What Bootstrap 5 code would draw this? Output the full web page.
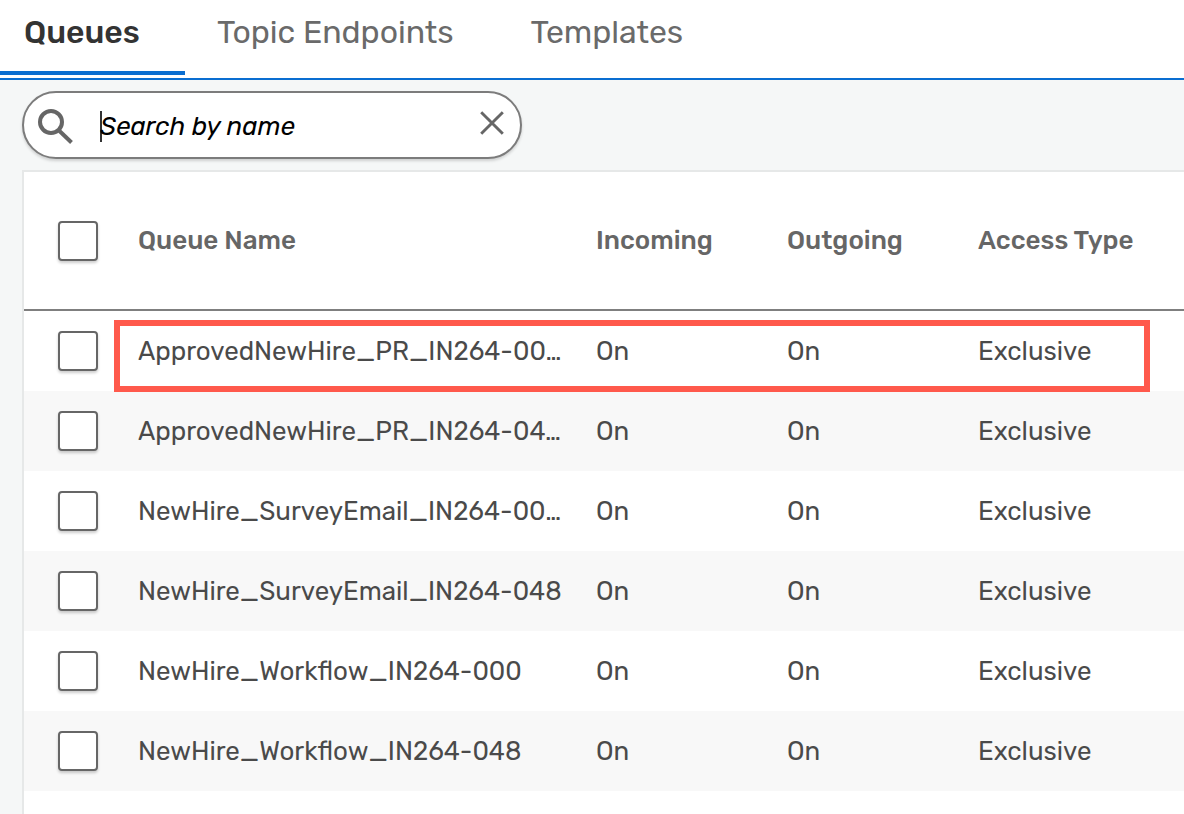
<!DOCTYPE html>
<html lang="en">
<head>
<meta charset="utf-8">
<meta name="viewport" content="width=device-width, initial-scale=1">
<title>Queues</title>
<link href="https://cdn.jsdelivr.net/npm/bootstrap@5.3.0/dist/css/bootstrap.min.css" rel="stylesheet">
<style>
  body { font-family: Rubik, Roboto, "Liberation Sans", sans-serif; background: #f5f7f7; height: 814px; font-size: 26px; }
  .tab-bar { height: 80px; border-bottom: 2px solid #0a6ed1; }
  .tab-bar .nav-link { height: 75px; padding: 8px 0 0; font-size: 32px; line-height: 48px; color: #6a6a6a; border-radius: 0; white-space: nowrap; letter-spacing: -.04px; }
  .tab-bar .nav-link.active { width: 185px; padding-left: 24px; color: #333; font-weight: 500; border-bottom: 4px solid #0a6ed1; }
  .tab-topic { margin-left: 32px; width: 313.5px; }
  .search-box { width: 500px; height: 68px; margin: 11px 0 11px 22px; padding: 0 15px 0 13px; border: 2px solid #7c7c7c; border-radius: 34px; box-shadow: 0 2px 3px rgba(0,0,0,.16); }
  .search-box .caret-line { width: 2px; height: 31px; margin: 2px 0 0 24px; background: #333; }
  .search-text { font-style: italic; color: #000; line-height: 40px; margin: 3px 0 0 -2px; letter-spacing: -.08px; }
  .clear-icon { margin-top: -4px; }
  .grid-panel { margin-left: 22px; border: 2px solid #e6e8e8; border-width: 2px 0 0 2px; height: 644px; }
  .queue-table { table-layout: fixed; border-collapse: separate; border-spacing: 0; width: 1160px; color: #4a4a4a; }
  .queue-table > :not(caption) > * > * { padding: 0; border: 0; height: 80px; vertical-align: middle; font-size: 25.93px; line-height: 40px; color: inherit; background: none; box-shadow: none; }
  .queue-table > thead > tr > th { height: 139px; padding: 1px 0 0; border-bottom: 2px solid #7f7f7f; color: #666; font-size: 26px; font-weight: 500; }
  .queue-table tbody tr:nth-child(even) { background: #f8f8f8; }
  .col-check { width: 114px; }
  .col-name { width: 458px; }
  .col-flow { width: 191px; }
  .queue-name { width: 425px; }
  .queue-table .form-check-input { display: block; width: 40px; height: 40px; margin: 0 0 0 34px; border: 2px solid #666; border-radius: 4px; background-color: #fff; box-shadow: 0 2px 3px rgba(0,0,0,.2); }
  .callout-frame { left: 90px; top: 148px; width: 1036px; height: 72px; border: 6px solid #ff594c; }
</style>
</head>
<body class="overflow-hidden">
<nav class="nav tab-bar bg-white flex-nowrap">
  <a class="nav-link active" href="#">Queues</a>
  <a class="nav-link tab-topic" href="#">Topic Endpoints</a>
  <a class="nav-link" href="#">Templates</a>
</nav>
<div class="search-box d-flex align-items-center bg-white" role="search">
  <svg width="39" height="40" viewBox="0 0 39 40" fill="none" stroke="#666" stroke-width="4"><circle cx="14" cy="17" r="11"/><path d="M22.5 26l12 11.5"/></svg>
  <span class="caret-line"></span>
  <span class="search-text flex-grow-1">Search by name</span>
  <svg class="clear-icon" width="26" height="26" viewBox="0 0 26 26" fill="none" stroke="#666" stroke-width="2.9"><path d="M2.2 2.2l21.6 21.6M23.8 2.2l-21.6 21.6"/></svg>
</div>
<main class="grid-panel bg-white position-relative">
  <table class="table queue-table mb-0">
    <colgroup><col class="col-check"><col class="col-name"><col class="col-flow"><col class="col-flow"><col></colgroup>
    <thead><tr><th><input class="form-check-input" type="checkbox" aria-label="Select all"></th><th>Queue Name</th><th>Incoming</th><th>Outgoing</th><th>Access Type</th></tr></thead>
    <tbody>
      <tr><td><input class="form-check-input" type="checkbox"></td><td><div class="queue-name text-nowrap">ApprovedNewHire_PR_IN264-00…</div></td><td>On</td><td>On</td><td>Exclusive</td></tr>
      <tr><td><input class="form-check-input" type="checkbox"></td><td><div class="queue-name text-nowrap">ApprovedNewHire_PR_IN264-04…</div></td><td>On</td><td>On</td><td>Exclusive</td></tr>
      <tr><td><input class="form-check-input" type="checkbox"></td><td><div class="queue-name text-nowrap">NewHire_SurveyEmail_IN264-00…</div></td><td>On</td><td>On</td><td>Exclusive</td></tr>
      <tr><td><input class="form-check-input" type="checkbox"></td><td><div class="queue-name text-nowrap">NewHire_SurveyEmail_IN264-048</div></td><td>On</td><td>On</td><td>Exclusive</td></tr>
      <tr><td><input class="form-check-input" type="checkbox"></td><td><div class="queue-name text-nowrap">NewHire_Workflow_IN264-000</div></td><td>On</td><td>On</td><td>Exclusive</td></tr>
      <tr><td><input class="form-check-input" type="checkbox"></td><td><div class="queue-name text-nowrap">NewHire_Workflow_IN264-048</div></td><td>On</td><td>On</td><td>Exclusive</td></tr>
    </tbody>
  </table>
  <div class="callout-frame position-absolute"></div>
</main>
<script src="https://cdn.jsdelivr.net/npm/bootstrap@5.3.0/dist/js/bootstrap.bundle.min.js"></script>
</body>
</html>
